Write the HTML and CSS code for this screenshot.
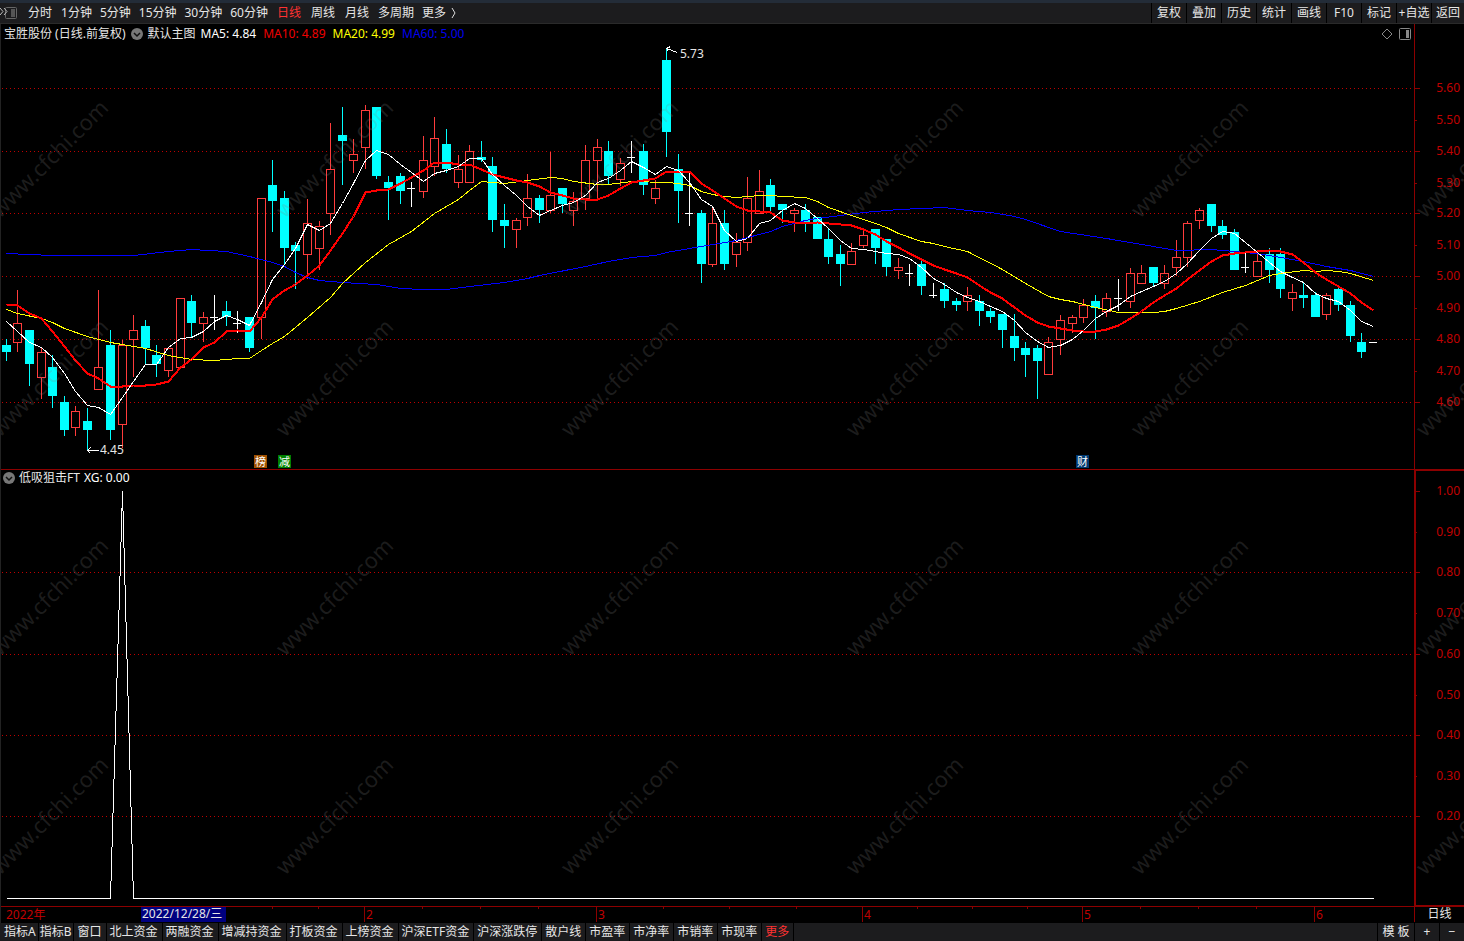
FILE: index.html
```html
<!DOCTYPE html>
<html lang="zh-CN">
<head>
  <meta charset="UTF-8" />
  <meta name="viewport" content="width=device-width, initial-scale=1.0"/>
  <title>宝胜股份 日线</title>
  <link rel="stylesheet" href="styles.css">
</head>
<body>

  <header class="top-bar">
    <nav class="periods">
      <button class="toggle" aria-label="侧栏">
        <svg width="18" height="14" viewBox="0 0 18 14">
          <rect x="5.500" y="1.500" width="11" height="11" rx="1" fill="none" stroke="#666"/>
          <rect x="11" y="3" width="4" height="8" fill="#555"/>
          <path d="M0 2l3 3.500-3 3.500M4 2l3 3.500-3 3.500" fill="none" stroke="#bbb"/>
        </svg>
      </button>
      <button class="wide">分时</button>
      <button>1分钟</button>
      <button>5分钟</button>
      <button>15分钟</button>
      <button>30分钟</button>
      <button>60分钟</button>
      <button class="wide active">日线</button>
      <button class="wide">周线</button>
      <button class="wide">月线</button>
      <button>多周期</button>
      <button class="more">更多
        <svg width="6" height="12" viewBox="0 0 6 12"><path d="M1 1l3 5-3 5" fill="none" stroke="#ddd"/></svg>
      </button>
    </nav>
    <nav class="tools">
      <button>复权</button>
      <button>叠加</button>
      <button>历史</button>
      <button>统计</button>
      <button>画线</button>
      <button>F10</button>
      <button>标记</button>
      <button>+自选</button>
      <button class="back">返回</button>
    </nav>
  </header>

  <main class="charts">
    <section class="pane main-pane">
      <svg class="plot" id="main-plot"></svg>
      <div class="legend">
        <span class="stock">宝胜股份 (日线.前复权)</span>
        <button class="drop" aria-label="主图指标">
          <svg width="12" height="12" viewBox="0 0 12 12"><circle cx="6" cy="6" r="6" fill="#777"/><path d="M3 5l3 3 3-3" fill="none" stroke="#111" stroke-width="1.500"/></svg>
        </button>
        <span>默认主图</span>
        <span class="ma ma5">MA5: 4.84</span>
        <span class="ma ma10">MA10: 4.89</span>
        <span class="ma ma20">MA20: 4.99</span>
        <span class="ma ma60">MA60: 5.00</span>
        <span class="pane-tools">
          <svg width="12" height="12" viewBox="0 0 12 12"><path d="M6 1l5 5-5 5-5-5z" fill="none" stroke="#888"/></svg>
          <svg width="12" height="12" viewBox="0 0 12 12"><rect x="0.500" y="0.500" width="11" height="11" rx="1" fill="none" stroke="#888"/><rect x="7" y="2" width="3" height="8" fill="#888"/></svg>
        </span>
      </div>
    </section>

    <section class="pane sub-pane">
      <svg class="plot" id="sub-plot"></svg>
      <div class="legend">
        <button class="drop" aria-label="副图指标">
          <svg width="12" height="12" viewBox="0 0 12 12"><circle cx="6" cy="6" r="6" fill="#777"/><path d="M3 5l3 3 3-3" fill="none" stroke="#111" stroke-width="1.500"/></svg>
        </button>
        <span>低吸狙击FT</span>
        <span class="ma5">XG: 0.00</span>
      </div>
    </section>

    <section class="dates">
      <svg class="plot" id="date-plot"></svg>
      <span class="period">日线</span>
    </section>

    <svg class="plot watermark" id="watermark"></svg>
  </main>

  <footer class="bottom-bar">
    <nav class="tabs">
      <button class="narrow">指标A</button>
      <button class="narrow">指标B</button>
      <button>窗口</button>
      <button>北上资金</button>
      <button>两融资金</button>
      <button>增减持资金</button>
      <button>打板资金</button>
      <button>上榜资金</button>
      <button>沪深ETF资金</button>
      <button>沪深涨跌停</button>
      <button>散户线</button>
      <button>市盈率</button>
      <button>市净率</button>
      <button>市销率</button>
      <button>市现率</button>
      <button class="active">更多</button>
    </nav>
    <nav class="zoom">
      <button class="template">模 板</button>
      <button>+</button>
      <button>−</button>
    </nav>
  </footer>

  <script src="chart.js"></script>
</body>
</html>
```
FILE: styles.css
```css
* {
  box-sizing: border-box;
}

body {
  margin: 0;
  height: 100vh;
  display: flex;
  flex-direction: column;
  overflow: hidden;
  background: #000;
  color: #e6e6e6;
  font-family: "Noto Sans", "Noto Sans CJK SC", sans-serif;
  font-size: 12px;
  line-height: 16px;
}

button {
  margin: 0;
  padding: 0;
  border: none;
  background: none;
  color: inherit;
  font: inherit;
  white-space: nowrap;
  cursor: pointer;
}

svg {
  display: block;
}

.top-bar {
  height: 24px;
  flex: none;
  display: flex;
  justify-content: space-between;
  background: #1c1c1e;
  border-top: 3px solid #232c38;
  border-bottom: 1px solid #2a2a2a;
}

.periods {
  display: flex;
  align-items: center;
  gap: 8px;
}

.periods .toggle {
  margin-right: 1px;
}

.periods .wide {
  padding: 0 1px;
}

.periods .more {
  display: flex;
  align-items: center;
  gap: 5px;
}

.active {
  color: #ff3232;
}

.tools {
  display: flex;
}

.tools button {
  width: 35px;
  border-left: 1px solid #000;
}

.tools .back {
  width: 33px;
}

.charts {
  flex: 1;
  min-height: 0;
  display: flex;
  flex-direction: column;
  position: relative;
  border-left: 1px solid #222;
}

.pane {
  position: relative;
  min-height: 0;
}

.main-pane {
  flex: 446 1 0;
}

.sub-pane {
  flex: 436 1 0;
}

.plot {
  position: absolute;
  top: 0;
  left: 0;
  width: 100%;
  height: 100%;
}

.watermark {
  pointer-events: none;
}

.legend {
  position: relative;
  display: flex;
  align-items: center;
  gap: 5px;
  padding: 2px 53px 0 3px;
}

.sub-pane .legend {
  gap: 4px;
  padding-top: 0;
  padding-left: 2px;
}

.ma {
  margin-right: 2px;
}

.pane-tools {
  display: flex;
  gap: 6px;
  margin-left: auto;
}

.ma5 {
  color: #fff;
}

.ma10 {
  color: #f00000;
}

.ma20 {
  color: #ff0;
}

.ma60 {
  color: #0000f0;
}

.dates {
  position: relative;
  height: 17px;
  flex: none;
  display: flex;
  justify-content: flex-end;
}

.period {
  width: 49px;
  text-align: center;
}

.bottom-bar {
  height: 18px;
  flex: none;
  display: flex;
  justify-content: space-between;
  background: #1c1c1e;
  padding-left: 3px;
}

.tabs,
.zoom {
  display: flex;
}

.tabs button {
  padding: 0 4px 0 3px;
  border-right: 1px solid #000;
}

.tabs .narrow {
  padding: 0 2px 0 1px;
}

.zoom button {
  width: 25px;
  border-left: 1px solid #000;
}

.zoom .template {
  width: 37px;
}

/* chart parts */
.plot text {
  fill: #e6e6e6;
}

.plot .axis-text {
  fill: #c00000;
}

.plot .mark {
  fill: rgba(128, 128, 128, 0.22);
  font-size: 22px;
}

.plot .badge {
  fill: #fff;
  font-size: 11px;
}

.grid {
  stroke: #c00000;
  stroke-dasharray: 1 3;
}

.axis {
  stroke: #8c0000;
}

.thick {
  stroke-width: 2;
}

.up {
  fill: none;
  stroke: #ff3c3c;
}

.down {
  fill: #0ff;
}

.down-wick {
  stroke: #0ff;
}

.flat {
  stroke: #fff;
}

.line {
  fill: none;
  stroke: #fff;
}

.line10 {
  stroke: #f00;
  stroke-width: 2;
}

.line20 {
  stroke: #ff0;
}

.line60 {
  stroke: #00f;
}
```
FILE: chart.js
```js
// Coordinates are in a 1464 x 941 workspace and scaled to the real size of each pane.
// Candle: [type, high, body top, body bottom, low], u = up, d = down, f = flat
const candles = [
  "d 339 345 352 361", "u 290 323 342 352", "d 330 330 364 386", "u 347 352 377 399", "d 355 367 396 408",
  "d 396 402 430 436", "u 406 411 427 436", "d 408 421 430 450", "u 290 367 389 389", "d 330 345 430 440",
  "u 340 345 424 448", "u 315 330 339 377", "d 320 326 348 365", "d 345 355 364 377", "u 347 348 370 377",
  "u 298 298 367 367", "d 295 301 323 338", "u 312 317 323 342", "f 295 317 317 330", "d 301 311 317 326",
  "f 311 323 323 333", "d 317 317 348 352", "u 198 198 317 339", "d 160 185 201 232", "d 191 198 248 264",
  "d 242 245 251 289", "u 199 223 254 279", "u 221 226 248 270", "u 123 169 213 235", "d 107 135 141 185",
  "u 139 154 160 173", "u 105 110 147 169", "d 107 107 176 179", "d 176 182 188 220", "d 173 176 191 204",
  "f 182 188 188 207", "u 136 160 191 198", "u 117 138 166 176", "d 129 144 169 173", "u 155 169 182 188",
  "u 145 151 182 182", "d 141 157 160 162", "d 157 166 220 232", "d 204 220 226 248", "u 218 220 229 248",
  "u 174 198 217 226", "d 195 198 210 223", "u 152 195 210 213", "d 188 188 204 213", "u 192 201 210 226",
  "u 145 160 198 210", "u 139 147 160 198", "d 141 151 176 184", "u 158 163 179 186", "f 141 157 157 173",
  "d 144 151 185 195", "u 180 188 198 204", "d 48 60 132 157", "d 154 169 191 223", "f 173 213 213 226",
  "d 210 213 264 283", "u 208 223 264 267", "d 210 223 264 270", "u 233 242 254 267", "u 177 198 242 251",
  "u 170 191 213 213", "d 179 185 207 211", "d 204 204 210 223", "u 208 210 213 232", "d 204 210 223 232",
  "d 217 217 239 239", "d 229 239 257 264", "d 245 254 264 286", "u 243 251 264 264", "u 230 235 245 248",
  "d 229 229 248 264", "d 239 239 267 276", "u 258 267 270 279", "f 264 273 273 286", "d 261 264 286 295",
  "f 283 295 295 298", "d 283 289 301 308", "d 298 301 305 311", "u 287 295 301 311", "d 295 301 311 326",
  "d 308 311 317 323", "d 314 314 330 348", "d 314 336 348 361", "d 342 348 355 377", "d 345 348 361 399",
  "u 337 342 374 374", "u 315 320 339 355", "u 315 317 323 333", "u 299 305 317 323", "d 295 301 308 339",
  "u 293 298 311 317", "f 279 298 298 311", "u 268 273 301 308", "u 265 273 283 283", "d 267 267 283 286",
  "u 265 273 283 289", "u 240 257 267 276", "u 221 223 257 267", "u 208 210 220 229", "d 204 204 226 232",
  "d 220 226 235 239", "d 229 232 270 270", "f 253 267 267 273", "u 254 261 276 276", "d 248 254 270 283",
  "d 248 254 289 298", "u 284 292 298 311", "d 283 295 298 308", "d 292 295 317 317", "u 293 295 314 320",
  "d 288 289 305 311", "d 301 305 336 342", "d 333 342 352 358", "f 342 342 342 342"
];

const ma5 = [321, 331, 342, 347, 357, 373, 391, 405, 407, 414, 397, 381, 364, 364, 347, 338, 337, 331, 321, 315,
  319, 325, 302, 279, 264, 248, 224, 230, 223, 203, 183, 160, 150, 154, 164, 172, 181, 173, 170, 166,
  158, 158, 174, 185, 195, 206, 215, 210, 205, 202, 195, 182, 178, 170, 161, 167, 174, 166, 170, 182,
  199, 206, 230, 241, 238, 223, 220, 210, 203, 208, 218, 228, 240, 248, 249, 251, 253, 254, 258, 267,
  278, 284, 292, 297, 301, 306, 311, 320, 332, 341, 347, 345, 339, 330, 318, 311, 305, 296, 291, 286,
  281, 273, 263, 250, 238, 231, 233, 242, 252, 262, 271, 277, 282, 293, 298, 301, 310, 321, 326];

const ma10 = [304, 305, 313, 318, 331, 346, 360, 373, 378, 386, 386, 385, 385, 384, 381, 367, 359, 347, 342, 331,
  330, 331, 317, 299, 290, 284, 275, 265, 250, 233, 216, 192, 190, 189, 183, 177, 170, 162, 162, 164,
  164, 169, 174, 177, 180, 182, 186, 192, 195, 198, 199, 199, 195, 188, 182, 180, 178, 171, 171, 171,
  183, 190, 198, 206, 210, 211, 212, 220, 222, 223, 222, 223, 224, 225, 229, 234, 241, 247, 253, 259,
  265, 269, 273, 277, 285, 292, 298, 307, 315, 322, 326, 328, 330, 331, 331, 329, 325, 318, 311, 302,
  295, 288, 279, 270, 261, 255, 253, 252, 251, 250, 251, 254, 262, 272, 279, 286, 293, 302, 310];

// sparse lines, [day, y]
const ma20 = [[0, 309], [1, 313], [3, 318], [4, 322], [5, 328], [7, 336], [9, 342], [10, 344], [12, 348],
  [14, 355], [16, 359], [18, 360], [20, 358], [21, 358], [22, 350], [23, 343], [24, 336], [26, 317], [28, 297],
  [29, 283], [31, 262], [33, 244], [35, 231], [37, 213], [39, 199], [40, 190], [41, 181], [43, 183], [45, 180],
  [47, 177], [48, 178], [49, 181], [51, 184], [52, 184], [54, 181], [57, 182], [58, 183], [59, 185], [60, 191],
  [61, 194], [62, 196], [63, 197], [65, 195], [66, 195], [67, 196], [69, 197], [70, 201], [71, 207], [73, 215],
  [75, 223], [76, 227], [77, 233], [79, 241], [80, 243], [81, 246], [83, 251], [86, 269], [88, 283], [90, 296],
  [91, 299], [92, 301], [94, 307], [96, 312], [99, 312], [100, 311], [101, 308], [103, 301], [105, 292],
  [107, 285], [109, 275], [110, 273], [112, 270], [113, 271], [114, 270], [115, 271], [116, 273], [118, 280]];

const ma60 = [[0, 253], [4, 255], [11, 255], [14, 251], [16, 249], [19, 251], [21, 256], [23, 262], [24, 266],
  [25, 272], [26, 277], [27, 280], [29, 282], [32, 284], [34, 288], [36, 289], [38, 289], [40, 286], [43, 282],
  [45, 278], [46, 275], [50, 266], [52, 261], [54, 257], [56, 255], [57, 252], [59, 248], [60, 246], [63, 240],
  [66, 231], [67, 226], [69, 220], [70, 218], [74, 212], [77, 209], [81, 207], [83, 210], [85, 212], [87, 216],
  [88, 219], [91, 231], [95, 238], [99, 246], [101, 250], [104, 249], [107, 252], [109, 255], [112, 261],
  [114, 266], [116, 270], [118, 276]];

const FULL_WIDTH = 1464;
const AXIS = 49;

function el(svg, name, attrs, text) {
  const node = document.createElementNS("http://www.w3.org/2000/svg", name);
  for (const key in attrs) node.setAttribute(key, attrs[key]);
  if (text) node.textContent = text;
  svg.appendChild(node);
}

// top and height are those of the pane in workspace units
function pane(id, top, height) {
  const svg = document.getElementById(id);
  svg.innerHTML = "";
  const w = svg.clientWidth;
  const h = svg.clientHeight;
  const right = w - AXIS;
  const x = v => Math.round((v - 1) * right / (FULL_WIDTH - 1 - AXIS));
  const y = v => Math.round((v - top) * h / height);
  return {
    svg, w, h, right, x, y,
    day: i => x(5.78 + i * 1367 / 118),
    line(x1, y1, x2, y2, cls) {
      el(svg, "line", { x1, y1, x2, y2, class: cls, "shape-rendering": "crispEdges" });
    },
    rect(rx, ry, width, height, attrs) {
      el(svg, "rect", { x: rx, y: ry, width, height, "shape-rendering": "crispEdges", ...attrs });
    },
    text(tx, ty, str, cls, anchor) {
      el(svg, "text", { x: tx, y: ty, class: cls || "", "text-anchor": anchor || "start" }, str);
    },
    poly(points, cls) {
      const str = points.map(p => `${p[0] + 0.5},${p[1] + 0.5}`).join(" ");
      el(svg, "polyline", { points: str, class: cls, "shape-rendering": "crispEdges" });
    }
  };
}

function drawScale(p, labels, gridRows) {
  gridRows.forEach(v => p.line(1, p.y(v) + 0.5, p.right, p.y(v) + 0.5, "grid"));
  labels.forEach(([v, str]) => {
    const long = gridRows.includes(v) || str === "1.00";
    p.line(p.right, p.y(v) + 0.5, p.right + (long ? 5 : 2), p.y(v) + 0.5, "axis");
    p.text(p.w - 4, p.y(v) + 4, str, "axis-text", "end");
  });
}

function drawMain() {
  const p = pane("main-plot", 24, 446);
  const rows = [88, 120, 151, 183, 213, 245, 276, 308, 339, 371, 402];
  drawScale(p, rows.map((v, i) => [v, (5.6 - i / 10).toFixed(2)]), rows.filter((v, i) => i % 2 === 0));
  p.line(p.right - 0.5, 0, p.right - 0.5, p.h, "axis");
  p.line(0, p.h - 0.5, p.right, p.h - 0.5, "axis");
  p.line(p.right, p.h, p.w, p.h, "axis thick");

  candles.forEach((row, i) => {
    const [type, ...v] = row.split(" ");
    const [high, top, bottom, low] = v.map(n => p.y(Number(n)));
    const x = p.day(i);
    if (type === "d") {
      p.line(x + 0.5, high, x + 0.5, low, "down-wick");
      p.rect(x - 4, top, 9, bottom - top, { class: "down" });
    } else if (type === "u") {
      p.line(x + 0.5, high, x + 0.5, top, "up");
      p.line(x + 0.5, bottom, x + 0.5, low, "up");
      p.rect(x - 3.5, top + 0.5, 8, bottom - top, { class: "up" });
    } else {
      p.line(x + 0.5, high, x + 0.5, low, "flat");
      p.line(x - 4, top + 0.5, x + 4, top + 0.5, "flat");
    }
  });

  p.poly(ma60.map(m => [p.day(m[0]), p.y(m[1])]), "line line60");
  p.poly(ma20.map(m => [p.day(m[0]), p.y(m[1])]), "line line20");
  p.poly(ma10.map((v, i) => [p.day(i), p.y(v)]), "line line10");
  p.poly(ma5.map((v, i) => [p.day(i), p.y(v)]), "line");

  // highest and lowest price
  const hi = p.day(57);
  p.poly([[hi + 4, p.y(46)], [hi, p.y(48)], [hi + 2, p.y(51)]], "line");
  p.poly([[hi, p.y(48)], [hi + 11, p.y(52)]], "line");
  p.text(hi + 14, p.y(58), "5.73");
  const lo = p.day(7);
  p.poly([[lo + 3, p.y(447)], [lo, p.y(450)], [lo + 3, p.y(453)]], "line");
  p.poly([[lo, p.y(450)], [lo + 11, p.y(450)]], "line");
  p.text(lo + 13, p.y(454), "4.45");

  [[254, "榜", "#a05000"], [278, "减", "#008000"], [1076, "财", "#003870"]].forEach(([x, str, fill]) => {
    p.rect(p.x(x), p.y(455), 13, 13, { fill });
    p.text(p.x(x) + 1, p.y(466), str, "badge");
  });
}

function drawSub() {
  const p = pane("sub-plot", 470, 436);
  const rows = [491, 532, 572, 613, 654, 695, 735, 776, 816];
  drawScale(p, rows.map((v, i) => [v, (1 - i / 10).toFixed(2)]), [572, 654, 735, 816]);
  p.line(p.right, 0, p.right, p.h, "axis thick");
  p.line(p.right, 0.5, p.w, 0.5, "axis");
  p.line(p.right, p.h - 0.5, p.w, p.h - 0.5, "axis");
  p.poly([[p.day(0), p.y(898)], [p.day(9), p.y(898)], [p.day(10), p.y(491)], [p.day(11), p.y(898)],
    [p.day(118), p.y(898)]], "line");
}

function drawDates() {
  const p = pane("date-plot", 906, 17);
  p.line(0, 0.5, p.w, 0.5, "axis");
  p.line(p.right - 0.5, 0, p.right - 0.5, 16, "axis");
  [272, 318, 422, 480, 538, 663, 729, 796, 917, 972, 1027, 1140, 1198, 1256].forEach(v => {
    p.line(p.x(v) + 0.5, 0, p.x(v) + 0.5, 3, "axis");
  });
  [[364, "2"], [596, "3"], [862, "4"], [1082, "5"], [1314, "6"]].forEach(([v, str]) => {
    p.line(p.x(v) + 0.5, 0, p.x(v) + 0.5, 16, "axis");
    p.text(p.x(v) + 2, 13, str, "axis-text");
  });
  p.text(p.x(6), 13, "2022年", "axis-text");
  p.rect(p.x(141), 1, 85, 15, { fill: "#000080" });
  p.text(p.x(142), 12, "2022/12/28/三");
}

function drawWatermark() {
  const p = pane("watermark", 24, 899);
  for (let row = 0; row < 4; row++) {
    for (let col = 0; col < 6; col++) {
      const x = p.x(col * 285);
      const y = p.y(219 + row * 219);
      el(p.svg, "text", { class: "mark", transform: `translate(${x} ${y}) rotate(-45)` }, "www.cfchi.com");
    }
  }
}

function draw() {
  drawMain();
  drawSub();
  drawDates();
  drawWatermark();
}

draw();
window.addEventListener("resize", draw);
```
